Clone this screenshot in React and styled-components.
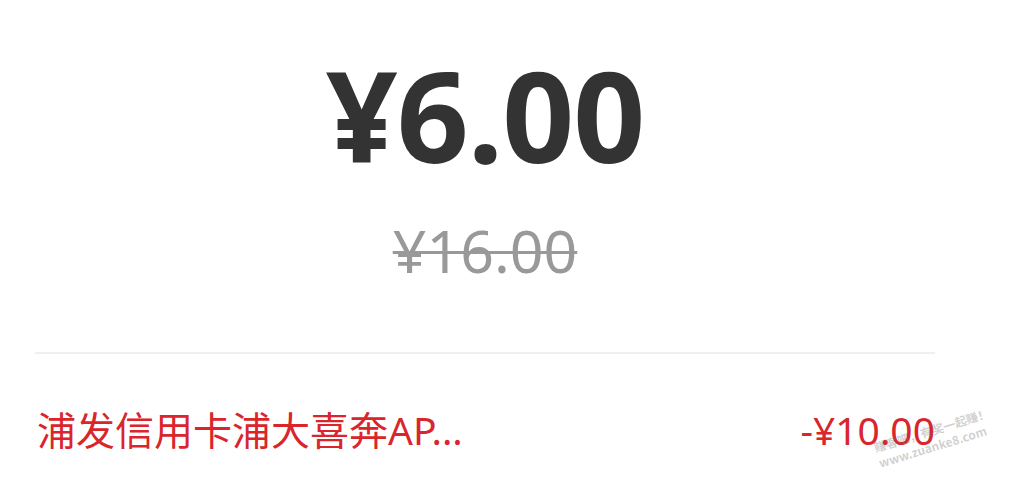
import React from 'react';
import styled, { createGlobalStyle } from 'styled-components';

const GlobalStyle = createGlobalStyle`
  html, body {
    margin: 0;
    padding: 0;
    background: #fff;
  }
  body {
    font-family: "Noto Sans", "Noto Sans CJK SC", sans-serif;
  }
`;

const Page = styled.div`
  position: relative;
  width: 1020px;
  height: 494px;
  overflow: hidden;
  background: #fff;
  padding: 0 85px 0 35px;
  box-sizing: border-box;
`;

const PriceBlock = styled.div`
  display: flex;
  flex-direction: column;
  align-items: center;
  padding-top: 44px;
  padding-bottom: 64px;
  border-bottom: 2px solid #f0f0f0;
`;

const Price = styled.div`
  font-size: 126px;
  font-weight: 700;
  color: #333;
  line-height: 140px;
  letter-spacing: -1px;
`;

const OldPrice = styled.div`
  margin-top: 28px;
  font-size: 59px;
  color: #999;
  line-height: 76px;
  text-decoration: line-through;
  text-decoration-thickness: 3px;
`;

const DiscountRow = styled.div`
  display: flex;
  justify-content: space-between;
  align-items: center;
  padding: 0 0 0 2px;
  margin-top: 50px;
  color: #d9252b;
  font-size: 39px;
  line-height: 52px;
`;

const Label = styled.span`
  white-space: nowrap;
`;

const Amount = styled.span`
  font-family: "Noto Sans", sans-serif;
`;

const Watermark = styled.div`
  position: absolute;
  left: 872px;
  top: 440px;
  transform: rotate(-17deg);
  transform-origin: left top;
  color: rgba(120, 120, 120, 0.35);
  font-size: 12px;
  line-height: 16px;
  font-weight: 700;
  font-family: "Noto Sans CJK SC", sans-serif;
  white-space: nowrap;
`;

export default function App() {
  return (
    <>
      <GlobalStyle />
      <Page>
        <PriceBlock>
          <Price>¥6.00</Price>
          <OldPrice>¥16.00</OldPrice>
        </PriceBlock>
        <DiscountRow>
          <Label>浦发信用卡浦大喜奔AP...</Label>
          <Amount>-¥10.00</Amount>
        </DiscountRow>
        <Watermark>
          <div>赚客吧，有奖一起赚！</div>
          <div>www.zuanke8.com</div>
        </Watermark>
      </Page>
    </>
  );
}
